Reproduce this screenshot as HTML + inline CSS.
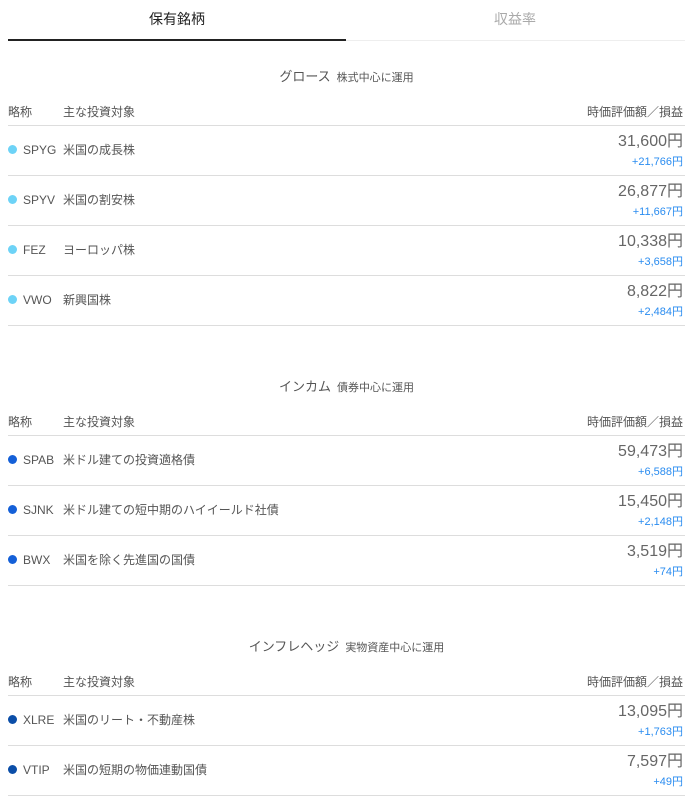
<!DOCTYPE html><html><head><meta charset="utf-8"><style>
*{margin:0;padding:0;box-sizing:border-box}
body{width:693px;height:805px;background:#fff;font-family:"Liberation Sans","Noto Sans CJK JP",sans-serif;color:#555;position:relative;overflow:hidden}
.a{position:absolute;white-space:nowrap;line-height:16px}
.tab{top:11px;font-size:14px;width:338px;text-align:center}
.hl{position:absolute;left:8px;width:677px;height:1px;background:#ddd}
.t{font-size:13px;color:#555;width:677px;left:8px;text-align:center}
.t small{font-size:11px;margin-left:6px}
.h{font-size:12px;color:#555}
.dot{position:absolute;left:8px;width:9px;height:9px;border-radius:50%}
.n{font-size:12px;color:#555}
.v{font-size:16px;color:#666;right:10px;text-align:right;line-height:20px}
.g{font-size:11px;color:#2a8cf0;right:10px;text-align:right}
</style></head><body>
<div class="a tab" style="left:8px;color:#222">保有銘柄</div>
<div class="a tab" style="left:346px;color:#aaa">収益率</div>
<div class="hl" style="top:40px;background:#eee"></div>
<div class="a" style="left:8px;top:39px;width:338px;height:2px;background:#222"></div>
<div id="c"></div>
<script>
var S=[[76,"グロース","株式中心に運用","#6dd3f7",[["SPYG","米国の成長株","31,600円","+21,766円"],["SPYV","米国の割安株","26,877円","+11,667円"],["FEZ","ヨーロッパ株","10,338円","+3,658円"],["VWO","新興国株","8,822円","+2,484円"]]],
[386,"インカム","債券中心に運用","#1460d8",[["SPAB","米ドル建ての投資適格債","59,473円","+6,588円"],["SJNK","米ドル建ての短中期のハイイールド社債","15,450円","+2,148円"],["BWX","米国を除く先進国の国債","3,519円","+74円"]]],
[646,"インフレヘッジ","実物資産中心に運用","#0b4ea8",[["XLRE","米国のリート・不動産株","13,095円","+1,763円"],["VTIP","米国の短期の物価連動国債","7,597円","+49円"]]]];
var h="";S.forEach(function(s){var y=s[0];
h+='<div class="a t" style="top:'+(y-7)+'px">'+s[1]+'<small>'+s[2]+'</small></div>';
h+='<div class="a h" style="left:8px;top:'+(y+28)+'px">略称</div><div class="a h" style="left:63px;top:'+(y+28)+'px">主な投資対象</div><div class="a h" style="right:10px;top:'+(y+28)+'px">時価評価額／損益</div>';
var l=y+49;h+='<div class="hl" style="top:'+l+'px"></div>';
s[4].forEach(function(r){h+='<div class="dot" style="background:'+s[3]+';top:'+(l+20)+'px"></div>';
h+='<div class="a n" style="left:23px;top:'+(l+17)+'px">'+r[0]+'</div><div class="a n" style="left:63px;top:'+(l+17)+'px">'+r[1]+'</div>';
h+='<div class="a v" style="top:'+(l+7)+'px">'+r[2]+'</div><div class="a g" style="top:'+(l+29)+'px">'+r[3]+'</div>';
l+=50;h+='<div class="hl" style="top:'+l+'px"></div>';});});
document.getElementById("c").innerHTML=h;
</script>
</body></html>
